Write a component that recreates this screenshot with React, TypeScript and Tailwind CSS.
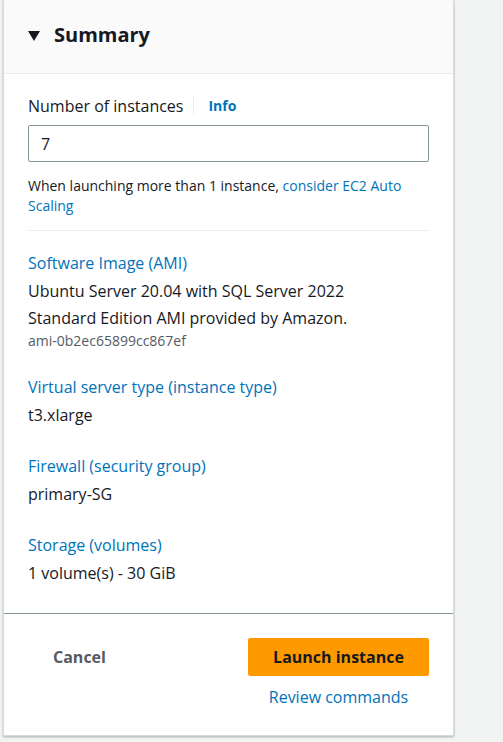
const items = [
  { label: 'Virtual server type (instance type)', value: 't3.xlarge' },
  { label: 'Firewall (security group)', value: 'primary-SG' },
  { label: 'Storage (volumes)', value: '1 volume(s) - 30 GiB' },
]

function SummaryItem({ label, value }: { label: string; value: string }) {
  return (
    <div className="mt-[25px]">
      <a className="block text-[16px] leading-6 text-[#0073bb]">{label}</a>
      <p className="mt-[3px] text-[16px] leading-[27px] text-[#16191f]">{value}</p>
    </div>
  )
}

export default function App() {
  return (
    <div className="min-h-[742px] w-[503px] bg-[#f2f3f3] pl-[3px] font-['Open_Sans',sans-serif]">
      <div className="w-[451px] border-x border-b border-[#d5dbdb] bg-white shadow-[0_1px_2px_0_rgba(0,28,36,0.3)]">
        <div className="flex h-[74px] items-center gap-[14px] border-b border-[#eaeded] bg-[#fafafa] px-6 pb-[3px]">
          <svg width="12" height="10" viewBox="0 0 12 10" className="mt-[1px]">
            <path d="M0 0h12L6 10z" fill="#16191f" />
          </svg>
          <h2 className="text-[20px] font-bold leading-7 text-[#16191f]">Summary</h2>
        </div>

        <div className="px-6 pt-5 pb-[26px]">
          <div className="flex items-center">
            <label className="text-[16px] leading-6 text-[#16191f]">Number of instances</label>
            <span className="mx-[10px] h-[18px] w-px bg-[#eaeded]" />
            <a className="ml-[4px] text-[14px] font-bold leading-6 text-[#0073bb]">Info</a>
          </div>
          <div className="mt-[7px] flex h-[37px] items-center rounded-[2px] border border-[#879596] px-3 text-[16px] text-[#16191f]">
            7
          </div>
          <p className="mt-[14px] text-[14px] leading-5 text-[#16191f]">
            When launching more than 1 instance, <a className="text-[#0073bb]">consider EC2 Auto Scaling</a>
          </p>

          <div className="mt-[14px] h-px bg-[#eaeded]" />

          <div className="mt-5">
            <a className="block text-[16px] leading-6 text-[#0073bb]">Software Image (AMI)</a>
            <p className="mt-[3px] max-w-[360px] text-[16px] leading-[27px] text-[#16191f]">
              Ubuntu Server 20.04 with SQL Server 2022 Standard Edition AMI provided by Amazon.
            </p>
            <p className="text-[14px] leading-[18px] text-[#545b64]">ami-0b2ec65899cc867ef</p>
          </div>

          {items.map((item) => (
            <SummaryItem key={item.label} label={item.label} value={item.value} />
          ))}
        </div>

        <div className="border-t border-[#879596] px-6 pt-6 pb-[28px]">
          <div className="flex items-center justify-between">
            <button className="ml-[25px] text-[16px] font-bold text-[#545b64]">Cancel</button>
            <button className="h-[38px] w-[181px] rounded-[2px] bg-[#ff9900] text-[16px] font-bold text-[#16191f]">
              Launch instance
            </button>
          </div>
          <div className="mt-[11px] flex justify-end">
            <a className="w-[181px] text-center text-[16px] leading-5 text-[#0073bb]">Review commands</a>
          </div>
        </div>
      </div>
    </div>
  )
}
